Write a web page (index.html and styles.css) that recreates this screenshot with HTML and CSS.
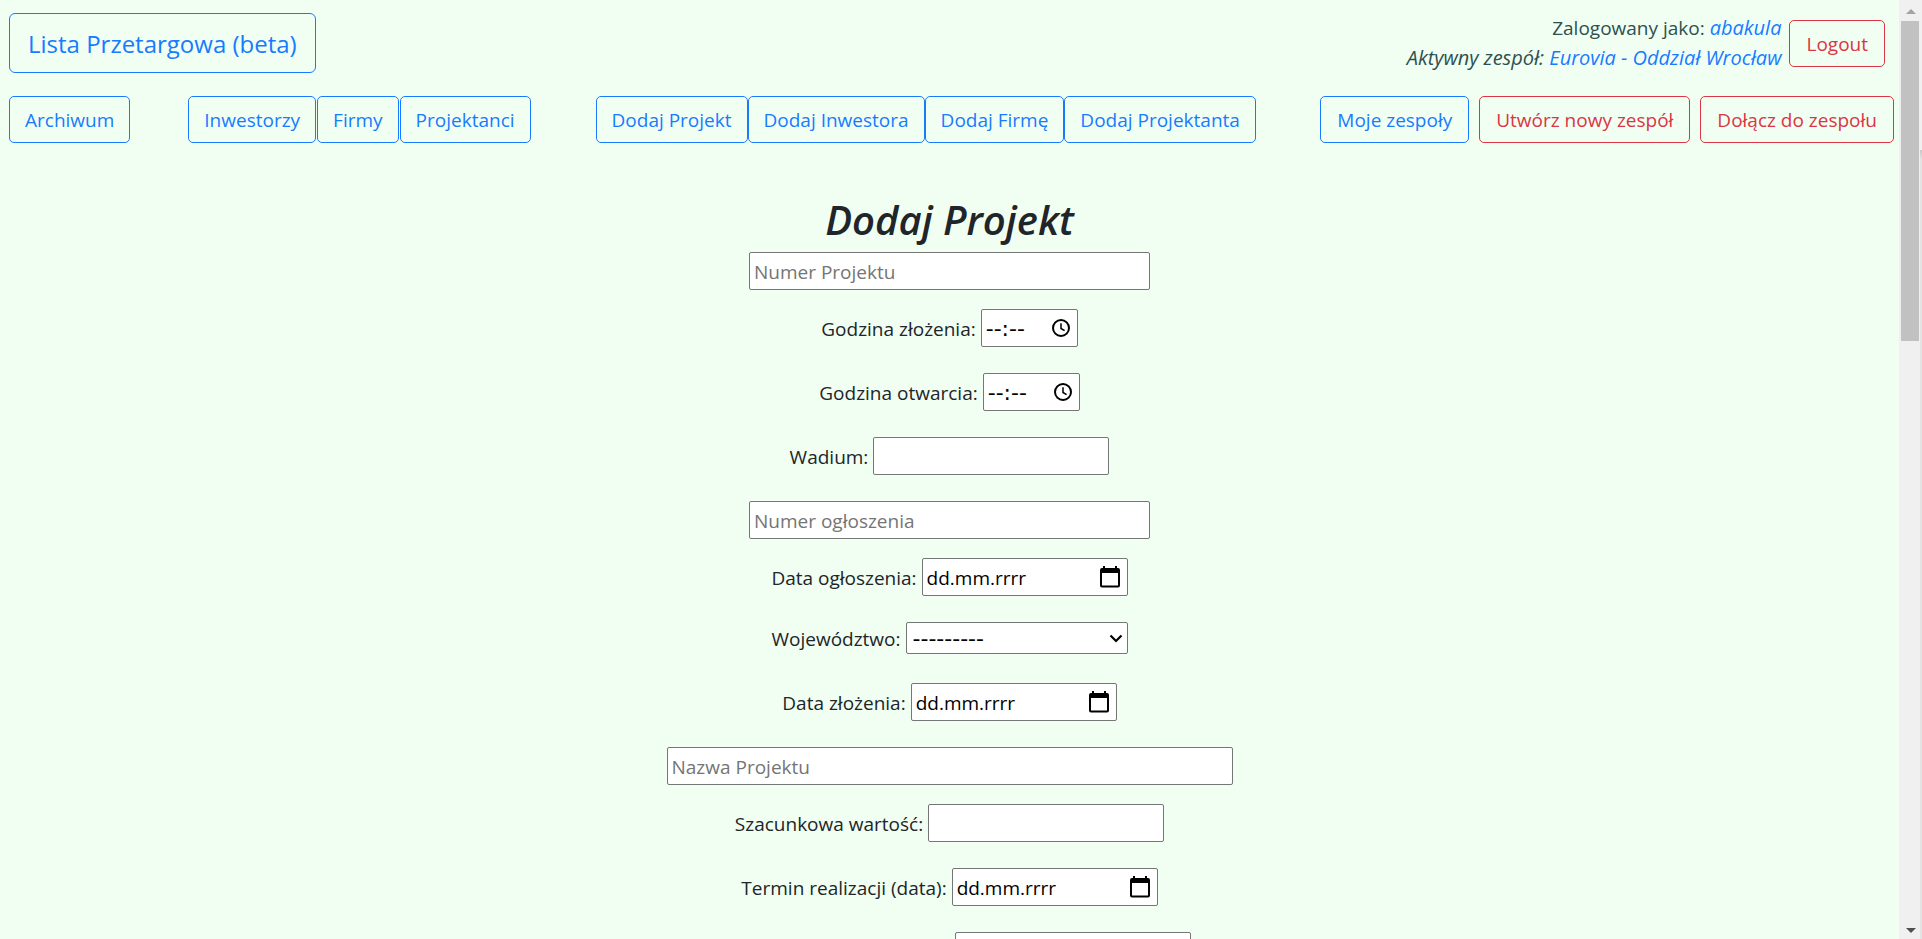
FILE: index.html
```html
<!DOCTYPE html>
<html lang="pl">
<head>
<meta charset="utf-8">
<title>Lista Przetargowa (beta)</title>
<link rel="stylesheet" href="styles.css">
</head>
<body>
<svg class="sprite" aria-hidden="true">
  <symbol id="clock" viewBox="0 0 20 20"><circle cx="10" cy="10" r="8" fill="none" stroke="currentColor" stroke-width="2"/><path d="M10 5.200V10.500L13.600 12.700" fill="none" stroke="currentColor" stroke-width="1.500"/></symbol>
  <symbol id="calendar" viewBox="0 0 20 22"><path fill="currentColor" fill-rule="evenodd" d="M3 0h2v2h10V0h2v2h1a2 2 0 0 1 2 2v15.500a2 2 0 0 1-2 2H2a2 2 0 0 1-2-2V4a2 2 0 0 1 2-2h1zM2 7v12.500h16V7z"/></symbol>
</svg>
<div class="window">
  <div class="page">
    <header class="top">
      <a class="btn btn-lg" href="#">Lista Przetargowa (beta)</a>
      <div class="account">
        <div class="who">
          <div>Zalogowany jako: <a href="#"><em>abakula</em></a></div>
          <div><em>Aktywny zespół: <a href="#">Eurovia - Oddział Wrocław</a></em></div>
        </div>
        <button class="btn btn-danger" type="button">Logout</button>
      </div>
    </header>
    <nav class="menu">
      <div class="group">
        <a class="btn" href="#">Archiwum</a>
      </div>
      <div class="group lists">
        <a class="btn" href="#">Inwestorzy</a>
        <a class="btn" href="#">Firmy</a>
        <a class="btn" href="#">Projektanci</a>
      </div>
      <div class="group add">
        <a class="btn" href="#">Dodaj Projekt</a>
        <a class="btn" href="#">Dodaj Inwestora</a>
        <a class="btn" href="#">Dodaj Firmę</a>
        <a class="btn" href="#">Dodaj Projektanta</a>
      </div>
      <div class="teams">
        <a class="btn" href="#">Moje zespoły</a>
        <a class="btn btn-danger" href="#">Utwórz nowy zespół</a>
        <a class="btn btn-danger" href="#">Dołącz do zespołu</a>
      </div>
    </nav>
    <main>
      <h1>Dodaj Projekt</h1>
      <form>
        <div class="row tight"><input class="box wide" type="text" placeholder="Numer Projektu" aria-label="Numer Projektu"></div>
        <div class="row"><label for="t1">Godzina złożenia:</label>
          <span class="box picker time"><input id="t1" type="text" placeholder="--:--"><button type="button" aria-label="Wybierz godzinę"><svg class="clock"><use href="#clock"/></svg></button></span></div>
        <div class="row"><label for="t2">Godzina otwarcia:</label>
          <span class="box picker time"><input id="t2" type="text" placeholder="--:--"><button type="button" aria-label="Wybierz godzinę"><svg class="clock"><use href="#clock"/></svg></button></span></div>
        <div class="row"><label for="wadium">Wadium:</label><input class="box" id="wadium" type="text"></div>
        <div class="row tight"><input class="box wide" type="text" placeholder="Numer ogłoszenia" aria-label="Numer ogłoszenia"></div>
        <div class="row"><label for="d1">Data ogłoszenia:</label>
          <span class="box picker date"><input id="d1" type="text" placeholder="dd.mm.rrrr"><button type="button" aria-label="Wybierz datę"><svg class="calendar"><use href="#calendar"/></svg></button></span></div>
        <div class="row select-row"><label for="woj">Województwo:</label>
          <span class="choice"><select class="box" id="woj"><option>---------</option></select><svg class="chevron" viewBox="0 0 14 9"><path d="M1.500 1.500L7 7l5.500-5.500" fill="none" stroke="currentColor" stroke-width="2.200"/></svg></span></div>
        <div class="row"><label for="d2">Data złożenia:</label>
          <span class="box picker date"><input id="d2" type="text" placeholder="dd.mm.rrrr"><button type="button" aria-label="Wybierz datę"><svg class="calendar"><use href="#calendar"/></svg></button></span></div>
        <div class="row tight"><input class="box widest" type="text" placeholder="Nazwa Projektu" aria-label="Nazwa Projektu"></div>
        <div class="row"><label for="val">Szacunkowa wartość:</label><input class="box" id="val" type="text"></div>
        <div class="row"><label for="d3">Termin realizacji (data):</label>
          <span class="box picker date"><input id="d3" type="text" placeholder="dd.mm.rrrr"><button type="button" aria-label="Wybierz datę"><svg class="calendar"><use href="#calendar"/></svg></button></span></div>
        <div class="row row-end"><label for="m">Termin realizacji (miesiące):</label><input class="box" id="m" type="text"></div>
      </form>
    </main>
  </div>
  <div class="scrollbar" aria-hidden="true">
    <svg class="up" viewBox="0 0 10 5"><path d="M0 5L5 0l5 5z" fill="currentColor"/></svg>
    <div class="track"><div class="thumb"></div></div>
    <svg class="down" viewBox="0 0 10 5"><path d="M0 0h10L5 5z" fill="currentColor"/></svg>
  </div>
</div>
</body>
</html>
```
FILE: styles.css
```css
* { box-sizing: border-box; }
body {
  margin: 0;
  font-family: "Open Sans", "Noto Sans", sans-serif;
  font-size: 19px;
  line-height: 30px;
  color: #212529;
  background: #f0fff2;
}
.sprite { display: none; }
a { color: #187bff; text-decoration: none; }
.window { display: flex; height: 100vh; overflow: hidden; }
.page { flex: 1; min-width: 0; overflow: hidden; }

.btn {
  display: inline-block;
  padding: 9px 16px 7px;
  border: 1px solid #187bff;
  border-radius: 5px;
  background: transparent;
  color: #187bff;
  font: inherit;
  line-height: 29px;
  white-space: nowrap;
}
.btn-lg { padding: 12px 18px 10px; border-radius: 6px; font-size: 24px; line-height: 36px; }
.btn-danger { border-color: #dc3545; color: #dc3545; }

.top { display: flex; justify-content: space-between; align-items: center; padding: 13px 14px 0 9px; }
.account { display: flex; align-items: center; gap: 8px; }
.who { text-align: right; color: #2f4f4f; }
.who em { font-size: 20px; }

.menu { display: flex; padding: 23px 5px 0 9px; }
.group { display: flex; }
.group .btn { padding: 9px 15px 7px; }
.lists { gap: 1px; margin-left: 58px; }
.add { margin-left: 65px; }
.teams { display: flex; gap: 10px; margin-left: auto; }

main { padding-top: 53px; text-align: center; }
h1 { margin: 0 0 8px; font-size: 40px; line-height: 48px; font-weight: 600; font-style: italic; }
.row { display: flex; justify-content: center; align-items: center; gap: 5px; margin-bottom: 26px; }
.row.tight { margin-bottom: 19px; }
.row.select-row { margin-bottom: 29px; }
.row.row-end { align-items: flex-end; }
.row label { padding-top: 2px; }
.box {
  width: 236px;
  height: 38px;
  padding: 2px 4px 0;
  border: 1px solid #767676;
  border-radius: 2px;
  background: #fff;
  color: #000;
  font: inherit;
}
.box::placeholder { color: #757575; opacity: 1; }
.wide { width: 401px; }
.widest { width: 566px; }
.picker { display: flex; align-items: center; justify-content: space-between; padding-top: 0; }
.picker input { flex: 1; min-width: 0; width: 0; padding: 2px 0 0; border: 0; background: none; font: inherit; color: #000; }
.picker input::placeholder { color: #000; opacity: 1; }
.picker button { display: flex; padding: 0; border: 0; background: none; color: #000; }
.time { width: 97px; padding-right: 6px; }
.date { width: 206px; padding-right: 7px; }
.time input, .choice select { font-family: "DejaVu Sans", sans-serif; font-size: 22px; }
.clock { width: 20px; height: 20px; }
.calendar { width: 20px; height: 22px; }
.choice { position: relative; display: flex; }
.choice select { appearance: none; width: 222px; height: 32px; padding: 1px 6px 0; line-height: 28px; }
.chevron { position: absolute; right: 5px; top: 12px; width: 14px; height: 9px; color: #000; pointer-events: none; }

.scrollbar {
  display: flex;
  flex-direction: column;
  align-items: center;
  width: 23px;
  padding: 9px 2px 6px;
  background: linear-gradient(#f0f0f0 16%, #c8c8c8 16%, #e3e3e3 17%) right / 2px 100% no-repeat #f0f0f0;
}
.scrollbar svg { width: 10px; height: 5px; }
.up { color: #a3a3a3; }
.down { color: #505050; }
.track { flex: 1; align-self: stretch; padding: 7px 1px 0 0; }
.thumb { height: 35.3%; background: #c1c1c1; }
```
